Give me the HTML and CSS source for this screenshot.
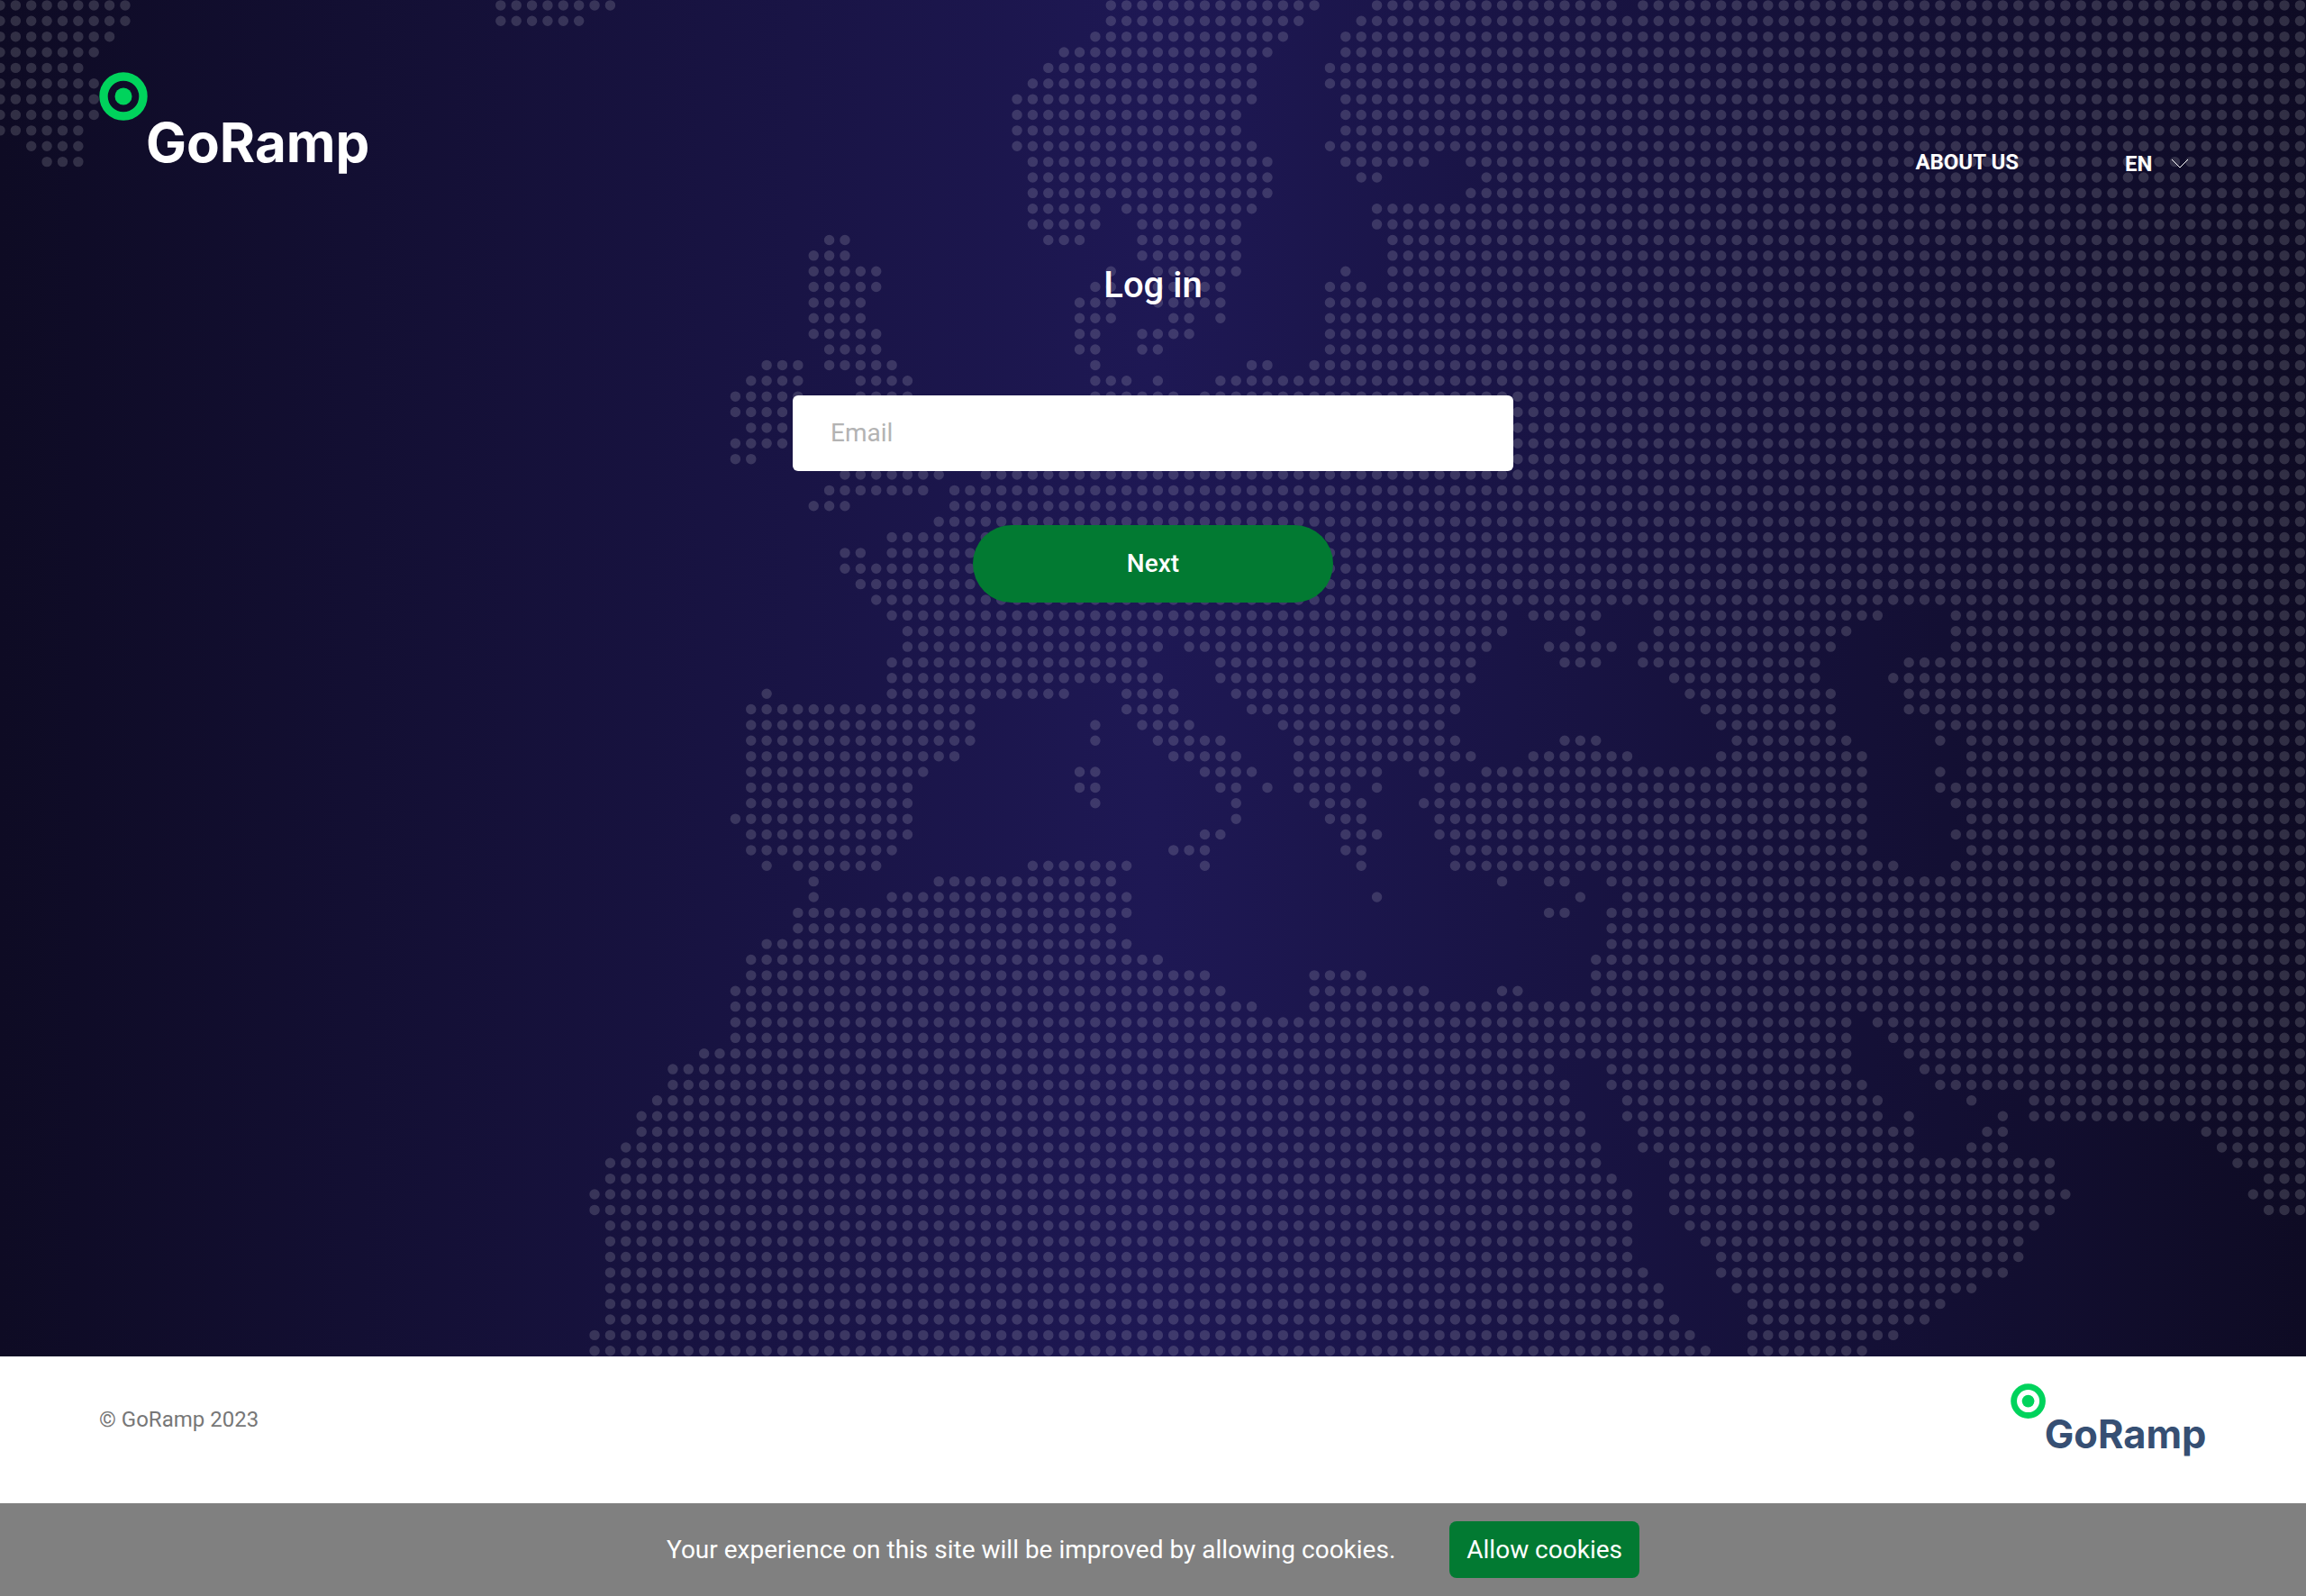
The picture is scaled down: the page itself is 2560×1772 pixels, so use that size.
FILE: index.html
```html
<!DOCTYPE html>
<html lang="en">
<head>
  <meta charset="utf-8">
  <meta name="viewport" content="width=device-width, initial-scale=1">
  <title>Log in | GoRamp</title>
  <link rel="stylesheet" href="styles.css">
</head>
<body>
  <div class="hero">
    <!-- Dotted world map: one unit per dot, each run is "M column row h length" -->
    <svg class="map" viewBox="0 -.34 147.38 86.7" preserveAspectRatio="xMidYMin slice" aria-hidden="true">
      <path d="M0 0h8.1M32 0h7.1M71 0h13.1M88 0h15.1M105 0h43
M0 1h8.1M32 1h5.1M71 1h12.1M87 1h61
M0 2h7.1M70 2h12.1M86 2h62
M0 3h6.1M68 3h13.1M86 3h62
M0 4h5.1M67 4h13.1M85 4h63
M0 5h6.1M66 5h14.1M85 5h63
M0 6h6.1M65 6h15.1M86 6h62
M0 7h6.1M65 7h14.1M86 7h62
M0 8h5.1M65 8h14.1M86 8h62
M2 9h3.1M65 9h15.1M85 9h63
M3 10h2.1M66 10h15.1M86 10h5.1M94 10h54
M66 11h15.1M87 11h1.1M95 11h53
M66 12h15.1M94 12h54
M66 13h4.1M72 13h8.1M88 13h60
M66 14h4.1M73 14h6.1M88 14h60
M53 15h1.1M67 15h2.1M73 15h6.1M89 15h59
M52 16h2.1M73 16h6.1M89 16h59
M52 17h4.1M71 17h.1M74 17h5.1M86 17h.1M89 17h59
M52 18h4.1M70 18h1.1M74 18h4.1M85 18h2.1M89 18h59
M52 19h3.1M69 19h2.1M74 19h4.1M85 19h63
M52 20h3.1M69 20h2.1M75 20h1.1M78 20h.1M85 20h63
M52 21h4.1M69 21h1.1M73 21h3.1M85 21h63
M53 22h3.1M69 22h1.1M73 22h1.1M85 22h63
M49 23h2.1M53 23h4.1M70 23h.1M80 23h1.1M84 23h64
M48 24h3.1M55 24h3.1M70 24h2.1M74 24h.1M78 24h70
M47 25h4.1M55 25h3.1M70 25h5.1M77 25h71
M47 26h3.1M55 26h4.1M68 26h80
M48 27h2.1M54 27h5.1M67 27h81
M47 28h3.1M54 28h5.1M66 28h82
M47 29h1.1M54 29h6.1M65 29h83
M54 30h6.1M63 30h85
M53 31h6.1M61 31h87
M52 32h2.1M61 32h87
M60 33h88
M57 34h91
M54 35h1.1M57 35h91
M54 36h94
M55 37h93
M56 38h92
M57 39h39.1M98 39h4.1M106 39h14.1M125 39h23
M58 40h38.1M101 40h.1M106 40h12.1M125 40h23
M58 41h16.1M76 41h19.1M99 41h4.1M105 41h12.1M125 41h23
M57 42h16.1M78 42h16.1M100 42h2.1M105 42h11.1M122 42h26
M57 43h17.1M78 43h16.1M107 43h9.1M121 43h27
M49 44h.1M57 44h11.1M72 44h3.1M79 44h14.1M108 44h9.1M122 44h26
M48 45h14.1M72 45h3.1M80 45h13.1M109 45h8.1M122 45h26
M48 46h14.1M70 46h.1M73 46h3.1M82 46h10.1M110 46h7.1M124 46h24
M48 47h14.1M70 47h.1M74 47h4.1M83 47h10.1M100 47h2.1M111 47h7.1M124 47h.1M126 47h22
M48 48h13.1M75 48h4.1M83 48h11.1M98 48h6.1M110 48h9.1M126 48h22
M48 49h11.1M69 49h1.1M77 49h3.1M83 49h5.1M91 49h1.1M95 49h24.1M124 49h.1M126 49h22
M48 50h10.1M69 50h1.1M78 50h1.1M81 50h.1M83 50h3.1M88 50h.1M92 50h27.1M124 50h24
M48 51h10.1M70 51h.1M79 51h.1M84 51h3.1M91 51h28.1M125 51h23
M47 52h11.1M79 52h.1M85 52h2.1M92 52h27.1M126 52h22
M48 53h10.1M77 53h1.1M86 53h2.1M92 53h27.1M125 53h23
M48 54h9.1M75 54h2.1M86 54h1.1M93 54h26.1M126 54h22
M49 55h.1M51 55h5.1M66 55h6.1M77 55h.1M87 55h.1M93 55h28.1M125 55h23
M52 56h.1M60 56h11.1M96 56h.1M99 56h1.1M103 56h45
M52 57h.1M57 57h15.1M88 57h.1M101 57h.1M104 57h44
M51 58h21.1M99 58h1.1M103 58h45
M51 59h20.1M103 59h45
M49 60h23.1M103 60h45
M48 61h26.1M102 61h46
M48 62h29.1M84 62h3.1M102 62h46
M47 63h31.1M84 63h7.1M96 63h1.1M102 63h46
M47 64h33.1M84 64h64
M47 65h71.1M120 65h28
M47 66h71.1M121 66h27
M45 67h73.1M122 67h26
M43 68h56.1M103 68h15.1M123 68h25
M43 69h57.1M103 69h16.1M124 69h24
M42 70h58.1M104 70h16.1M126 70h.1M130 70h18
M41 71h60.1M104 71h16.1M122 71h.1M128 71h.1M130 71h18
M41 72h60.1M105 72h17.1M127 72h1.1M141 72h7
M40 73h62.1M105 73h17.1M126 73h2.1M142 73h6
M39 74h63.1M107 74h24.1M143 74h5
M39 75h64.1M107 75h24.1M145 75h3
M38 76h66.1M107 76h25.1M144 76h4
M38 77h66.1M107 77h24.1M145 77h3
M39 78h65.1M108 78h22.1
M39 79h65.1M109 79h20.1
M39 80h65.1M110 80h19.1
M39 81h66.1M110 81h18.1
M39 82h67.1M111 82h15.1
M39 83h67.1M112 83h12.1
M39 84h68.1M112 84h11.1
M38 85h70.1M112 85h9.1
M38 86h71.1M112 86h7.1"/>
    </svg>

    <header class="header">
      <a class="logo-link" href="#" aria-label="GoRamp home">
        <svg class="logo" viewBox="0 0 301 116">
          <circle class="logo-ring" cx="27" cy="27" r="22"/>
          <circle class="logo-dot" cx="27" cy="27" r="9.5"/>
          <text class="logo-text" x="52" y="100">GoRamp</text>
        </svg>
      </a>
      <nav class="nav">
        <a class="nav-link" href="#">ABOUT US</a>
        <label class="language">
          <select class="language-select" aria-label="Language">
            <option>EN</option>
          </select>
          <svg class="chevron" viewBox="0 0 20 12" aria-hidden="true"><path d="M1 1l9 9 9-9"/></svg>
        </label>
      </nav>
    </header>

    <main class="login">
      <h1 class="title">Log in</h1>
      <form class="form">
        <input class="field" type="email" name="email" placeholder="Email" aria-label="Email">
        <button class="next" type="submit">Next</button>
      </form>
    </main>
  </div>

  <footer class="footer">
    <p class="copyright">© GoRamp 2023</p>
    <svg class="logo logo-small" viewBox="0 0 301 116" role="img" aria-label="GoRamp">
      <circle class="logo-ring" cx="27" cy="27" r="22"/>
      <circle class="logo-dot" cx="27" cy="27" r="9.5"/>
      <text class="logo-text" x="52" y="100">GoRamp</text>
    </svg>
  </footer>

  <div class="cookies" role="region" aria-label="Cookies">
    <p class="cookies-text">Your experience on this site will be improved by allowing cookies.</p>
    <button class="cookies-button" type="button">Allow cookies</button>
  </div>
</body>
</html>
```
FILE: styles.css
```css
*,
*::before,
*::after {
  box-sizing: border-box;
}

body {
  display: flex;
  flex-direction: column;
  min-height: 100vh;
  margin: 0;
  background: #fff;
  font-family: Roboto, "Liberation Sans", sans-serif;
}

h1,
p {
  margin: 0;
}

input,
button,
select {
  border: 0;
  font-family: inherit;
}

.hero {
  position: relative;
  flex: 1;
  overflow: hidden;
  background: linear-gradient(90deg, #0e0b24 0%, #1e1854 50%, #0e0b24 100%);
  color: #fff;
}

.map {
  position: absolute;
  inset: 0;
  width: 100%;
  height: 100%;
}

.map path {
  fill: none;
  stroke: #fff;
  stroke-opacity: .15;
  stroke-width: .66;
  stroke-linecap: round;
  stroke-dasharray: 0 1;
}

.header {
  position: relative;
  display: flex;
  justify-content: space-between;
  align-items: flex-end;
  padding: 80px 110px 0;
}

.logo-link {
  display: block;
  color: #fff;
}

.logo {
  display: block;
  width: 301px;
  overflow: visible;
}

.logo-small {
  width: 218px;
  color: #364f73;
}

.logo-ring {
  fill: none;
  stroke: #00d35c;
  stroke-width: 9.4;
}

.logo-dot {
  fill: #00d35c;
}

.logo-text {
  fill: currentColor;
  font-family: Inter, "Liberation Sans", sans-serif;
  font-size: 60px;
  font-weight: 700;
}

.nav {
  display: flex;
  align-items: flex-end;
  gap: 118px;
  padding-right: 20px;
  font-size: 24px;
  font-weight: 700;
  line-height: 28px;
}

.nav-link {
  padding-bottom: 2px;
  color: inherit;
  text-decoration: none;
}

.language {
  display: flex;
  align-items: center;
  gap: 20px;
}

.language-select {
  padding: 0;
  appearance: none;
  background: none;
  color: inherit;
  font-size: 24px;
  font-weight: 700;
  line-height: 28px;
}

.chevron {
  width: 20px;
  height: 12px;
  fill: none;
  stroke: #fff;
  stroke-width: 1;
}

.login {
  position: relative;
  display: flex;
  flex-direction: column;
  align-items: center;
  gap: 98px;
  padding: 97px 24px;
}

.title {
  font-size: 40px;
  font-weight: 500;
  line-height: 48px;
}

.form {
  display: flex;
  flex-direction: column;
  align-items: center;
  gap: 60px;
  width: 100%;
  max-width: 800px;
}

.field {
  width: 100%;
  height: 84px;
  padding: 0 42px 2px;
  border-radius: 6px;
  background: #fff;
  color: #333;
  font-size: 28px;
}

.field::placeholder {
  color: #b3b3b3;
}

.next {
  width: 50%;
  height: 86px;
  padding: 0 0 2px;
  border-radius: 43px;
  background: #027a32;
  color: #fff;
  font-size: 28px;
  font-weight: 500;
}

.footer {
  display: flex;
  justify-content: space-between;
  align-items: flex-start;
  height: 163px;
  padding: 30px 110px;
}

.copyright {
  padding-top: 26px;
  color: #777;
  font-size: 24px;
  line-height: 28px;
}

.cookies {
  display: flex;
  justify-content: center;
  align-items: center;
  gap: 60px;
  padding: 20px;
  background: #808080;
  color: #fff;
}

.cookies-text {
  font-size: 28px;
  line-height: 32px;
}

.cookies-button {
  height: 63px;
  padding: 0 19px;
  border-radius: 8px;
  background: #027a32;
  color: #fff;
  font-size: 28px;
}
```
